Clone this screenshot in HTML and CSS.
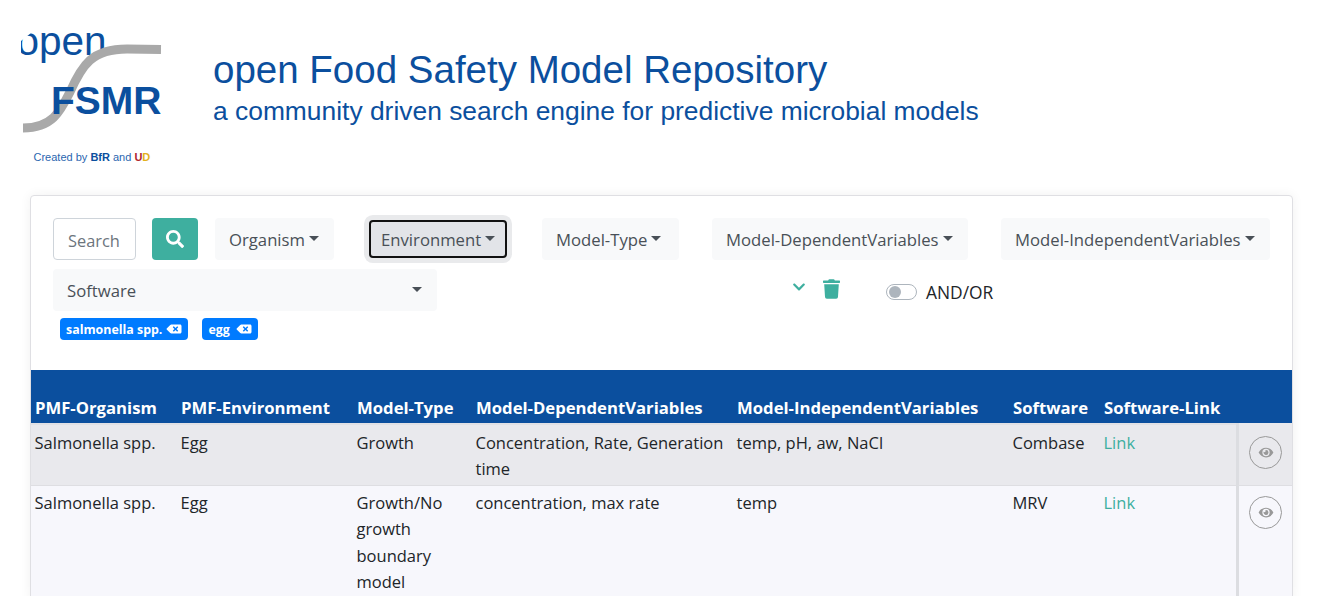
FILE: index.html
```html
<!DOCTYPE html>
<html lang="en">
<head>
    <meta charset="UTF-8">
    <meta name="viewport" content="width=device-width, initial-scale=1.0">
    <title>open Food Safety Model Repository</title>
    <link rel="stylesheet" href="styles.css">
</head>
<body>
    <header class="banner">
        <svg class="logo" width="190" height="150" viewBox="0 0 190 150">
            <clipPath id="open-clip"><polygon points="21,21 31,13 121,13 121,60 21,60"/></clipPath>
            <text class="logo-open" x="16.500" y="35" clip-path="url(#open-clip)">open</text>
            <path class="logo-curve" d="M23 108 C 52 108, 60 92, 70 72 C 82 45, 92 29, 127 29 L 161 29.500" />
            <text class="logo-fsmr" x="51" y="94">FSMR</text>
            <text class="logo-small" x="33.500" y="141">Created by <tspan class="logo-bold">BfR</tspan> and <tspan class="logo-u">U</tspan><tspan class="logo-d">D</tspan></text>
        </svg>
        <div class="banner-text">
            <h1>open Food Safety Model Repository</h1>
            <p>a community driven search engine for predictive microbial models</p>
        </div>
    </header>

    <main class="card">
        <div class="filters">
            <div class="filter-row">
                <input class="search-input" type="text" placeholder="Search">
                <button class="search-btn" aria-label="Search">
                    <svg width="18" height="18" viewBox="0 0 512 512"><path fill="#fff" d="M505 442.700 405.300 343c-4.500-4.500-10.600-7-17-7H372c27.600-35.300 44-79.700 44-128C416 93.100 322.900 0 208 0S0 93.100 0 208s93.100 208 208 208c48.300 0 92.700-16.400 128-44v16.300c0 6.400 2.500 12.500 7 17l99.700 99.700c9.400 9.400 24.600 9.400 33.900 0l28.300-28.300c9.400-9.400 9.400-24.600.1-34zM208 336c-70.700 0-128-57.200-128-128 0-70.700 57.200-128 128-128 70.700 0 128 57.200 128 128 0 70.700-57.200 128-128 128z"/></svg>
                </button>
                <button class="dropdown organism">Organism<span class="caret"></span></button>
                <button class="dropdown environment">Environment<span class="caret"></span></button>
                <button class="dropdown model-type">Model-Type<span class="caret"></span></button>
                <button class="dropdown dependent">Model-DependentVariables<span class="caret"></span></button>
                <button class="dropdown independent">Model-IndependentVariables<span class="caret"></span></button>
            </div>
            <div class="filter-row second">
                <button class="dropdown software">Software<span class="caret"></span></button>
                <svg class="chevron" width="14" height="14" viewBox="0 0 448 512"><path fill="#3eaf9f" d="M207 381.500 12.700 187.100c-9.400-9.400-9.400-24.600 0-33.900l22.700-22.700c9.400-9.400 24.500-9.400 33.900 0L224 284.500l154.700-154c9.400-9.300 24.500-9.300 33.900 0l22.700 22.700c9.400 9.400 9.400 24.600 0 33.900L241 381.500c-9.400 9.400-24.600 9.400-34 0z"/></svg>
                <svg class="trash" width="17" height="20" viewBox="0 0 448 512"><path fill="#3eaf9f" d="M432 32H312l-9.400-18.700A24 24 0 0 0 281.100 0H166.800a23.700 23.700 0 0 0-21.400 13.300L136 32H16A16 16 0 0 0 0 48v32a16 16 0 0 0 16 16h416a16 16 0 0 0 16-16V48a16 16 0 0 0-16-16zM53.200 467a48 48 0 0 0 47.900 45h245.800a48 48 0 0 0 47.900-45L416 128H32z"/></svg>
                <label class="toggle"><span class="switch"><span class="knob"></span></span>AND/OR</label>
            </div>
            <div class="tags">
                <span class="tag">salmonella spp.
                    <svg width="16" height="12" viewBox="0 0 640 512"><path fill="#fff" d="M576 64H205.300A64 64 0 0 0 160 82.700L9.400 233.400c-12.500 12.500-12.500 32.800 0 45.300L160 429.300c12 12 28.300 18.700 45.300 18.700H576c35.300 0 64-28.700 64-64V128c0-35.300-28.700-64-64-64zm-84.700 254.100c6.200 6.200 6.200 16.400 0 22.600l-22.600 22.600c-6.200 6.200-16.400 6.200-22.600 0L384 300.800l-62.100 62.100c-6.200 6.200-16.400 6.200-22.600 0l-22.600-22.600c-6.200-6.200-6.200-16.400 0-22.600l62.100-62.100-62.100-62.100c-6.200-6.200-6.200-16.400 0-22.600l22.600-22.600c6.200-6.200 16.400-6.200 22.600 0l62.100 62.100 62.100-62.100c6.200-6.200 16.400-6.200 22.600 0l22.600 22.600c6.200 6.200 6.200 16.400 0 22.600L429.300 256z"/></svg>
                </span>
                <span class="tag">egg
                    <svg width="16" height="12" viewBox="0 0 640 512"><path fill="#fff" d="M576 64H205.300A64 64 0 0 0 160 82.700L9.400 233.400c-12.500 12.500-12.500 32.800 0 45.300L160 429.300c12 12 28.300 18.700 45.300 18.700H576c35.300 0 64-28.700 64-64V128c0-35.300-28.700-64-64-64zm-84.700 254.100c6.200 6.200 6.200 16.400 0 22.600l-22.600 22.600c-6.200 6.200-16.400 6.200-22.600 0L384 300.800l-62.100 62.100c-6.200 6.200-16.400 6.200-22.600 0l-22.600-22.600c-6.200-6.200-6.200-16.400 0-22.600l62.100-62.100-62.100-62.100c-6.200-6.200-6.200-16.400 0-22.600l22.600-22.600c6.200-6.200 16.400-6.200 22.600 0l62.100 62.100 62.100-62.100c6.200-6.200 16.400-6.200 22.600 0l22.600 22.600c6.200 6.200 6.200 16.400 0 22.600L429.300 256z"/></svg>
                </span>
            </div>
        </div>

        <table class="results">
            <colgroup>
                <col class="c-org"><col class="c-env"><col class="c-type"><col class="c-dep"><col class="c-ind"><col class="c-soft"><col class="c-link"><col class="c-view">
            </colgroup>
            <thead>
                <tr>
                    <th>PMF-Organism</th>
                    <th>PMF-Environment</th>
                    <th>Model-Type</th>
                    <th>Model-DependentVariables</th>
                    <th>Model-IndependentVariables</th>
                    <th>Software</th>
                    <th>Software-Link</th>
                    <th></th>
                </tr>
            </thead>
            <tbody>
                <tr class="odd">
                    <td>Salmonella spp.</td>
                    <td>Egg</td>
                    <td>Growth</td>
                    <td>Concentration, Rate, Generation time</td>
                    <td>temp, pH, aw, NaCl</td>
                    <td>Combase</td>
                    <td><a href="#">Link</a></td>
                    <td class="view-cell"><button class="view-btn" aria-label="View"><svg width="16" height="13" viewBox="0 0 576 512"><path fill="#999" d="M572.500 241.400C518.300 135.600 410.900 64 288 64S57.700 135.600 3.500 241.400a32.400 32.400 0 0 0 0 29.200C57.700 376.400 165.100 448 288 448s230.300-71.600 284.500-177.400a32.400 32.400 0 0 0 0-29.200zM288 400a144 144 0 1 1 144-144 143.900 143.900 0 0 1-144 144zm0-240a95.300 95.300 0 0 0-25.300 3.800 47.900 47.900 0 0 1-66.900 66.900A95.800 95.800 0 1 0 288 160z"/></svg></button></td>
                </tr>
                <tr class="even">
                    <td>Salmonella spp.</td>
                    <td>Egg</td>
                    <td>Growth/No growth boundary model</td>
                    <td>concentration, max rate</td>
                    <td>temp</td>
                    <td>MRV</td>
                    <td><a href="#">Link</a></td>
                    <td class="view-cell"><button class="view-btn" aria-label="View"><svg width="16" height="13" viewBox="0 0 576 512"><path fill="#999" d="M572.500 241.400C518.300 135.600 410.900 64 288 64S57.700 135.600 3.500 241.400a32.400 32.400 0 0 0 0 29.200C57.700 376.400 165.100 448 288 448s230.300-71.600 284.500-177.400a32.400 32.400 0 0 0 0-29.200zM288 400a144 144 0 1 1 144-144 143.900 143.900 0 0 1-144 144zm0-240a95.300 95.300 0 0 0-25.300 3.800 47.900 47.900 0 0 1-66.900 66.900A95.800 95.800 0 1 0 288 160z"/></svg></button></td>
                </tr>
            </tbody>
        </table>
    </main>
</body>
</html>
```

FILE: styles.css
```css
html, body {
    height: 100%;
    overflow: hidden;
}
body {
    margin: 0;
    background: #fff;
    font-family: "Open Sans", "Noto Sans", sans-serif;
    font-size: 16px;
    color: #212529;
}

/* banner */
.banner {
    display: flex;
    height: 195px;
    padding-top: 20px;
    box-sizing: border-box;
}
.logo {
    flex: none;
    display: block;
}
.logo-open {
    font-family: "Liberation Sans", sans-serif;
    font-size: 40.500px;
    fill: #0b4f9e;
}
.logo-curve {
    fill: none;
    stroke: #a9a9a9;
    stroke-width: 9;
}
.logo-fsmr {
    font-family: "Liberation Sans", sans-serif;
    font-size: 39px;
    font-weight: 700;
    fill: #0b4f9e;
}
.logo-small {
    font-family: "Liberation Sans", sans-serif;
    font-size: 11px;
    fill: #2a66b0;
}
.logo-bold {
    font-weight: 700;
    fill: #0b4f9e;
}
.logo-u {
    font-weight: 700;
    fill: #b0242c;
}
.logo-d {
    font-weight: 700;
    fill: #e3b21c;
}
.banner-text {
    margin: 28px 0 0 23px;
    font-family: "Liberation Sans", sans-serif;
    color: #0b4f9e;
}
.banner-text h1 {
    margin: 0;
    font-size: 38.500px;
    font-weight: 400;
    line-height: 44px;
}
.banner-text p {
    margin: 2px 0 0;
    font-size: 26.400px;
    line-height: 34px;
}

/* card */
.card {
    margin: 0 25px 0 30px;
    border: 1px solid #dfdfe3;
    border-radius: 4px;
    box-shadow: 0 0 12px rgba(0, 0, 0, 0.06);
    background: #fff;
}
.filters {
    height: 174px;
    padding: 22px 22px 0;
    box-sizing: border-box;
}
.filter-row {
    display: flex;
    align-items: center;
}
.filter-row.second {
    margin-top: 9px;
}
.search-input {
    width: 83px;
    height: 42px;
    box-sizing: border-box;
    padding: 2px 14px 0;
    border: 1px solid #ced4da;
    border-radius: 4px;
    font: inherit;
    font-size: 16.400px;
}
.search-input::placeholder {
    color: #6c757d;
}
.search-btn {
    display: flex;
    align-items: center;
    justify-content: center;
    width: 46px;
    height: 42px;
    margin-left: 16px;
    border: none;
    border-radius: 4px;
    background: #3eaf9f;
}
.dropdown {
    display: flex;
    align-items: center;
    height: 42px;
    padding: 0 14px;
    border: none;
    border-radius: 4px;
    background: #f8f9fa;
    color: #495057;
    font: inherit;
    font-size: 16.700px;
    white-space: nowrap;
}
.caret {
    width: 0;
    height: 0;
    margin-left: 4px;
    margin-top: -2px;
    border-top: 5px solid #495057;
    border-left: 5px solid transparent;
    border-right: 5px solid transparent;
}
.organism {
    width: 119px;
    margin-left: 17px;
}
.environment {
    width: 138px;
    height: 38px;
    margin: 0 2px 0 35px;
    padding: 0 10px;
    background: #e2e4e8;
    border: 2px solid #111;
    box-shadow: 0 0 0 5px #e9eaec;
}
.model-type {
    width: 137px;
    margin-left: 33px;
}
.dependent {
    width: 256px;
    margin-left: 33px;
}
.independent {
    width: 269px;
    margin-left: 33px;
}
.software {
    justify-content: space-between;
    width: 384px;
    padding-right: 15px;
}
.chevron {
    margin: -7px 0 0 355px;
}
.trash {
    margin: -3px 0 0 17px;
}
.toggle {
    display: flex;
    align-items: center;
    margin: 3px 0 0 46px;
    font-size: 17.400px;
}
.switch {
    display: block;
    width: 31px;
    height: 16px;
    box-sizing: border-box;
    margin-right: 9px;
    padding: 1px 2px;
    border: 1px solid #adb5bd;
    border-radius: 8px;
}
.knob {
    display: block;
    width: 12px;
    height: 12px;
    border-radius: 50%;
    background: #adb5bd;
}
.tags {
    display: flex;
    gap: 14px;
    margin: 7px 0 0 7px;
}
.tag {
    display: flex;
    align-items: center;
    justify-content: space-between;
    gap: 4px;
    box-sizing: border-box;
    min-width: 56px;
    height: 22px;
    padding: 0 6px;
    border-radius: 4px;
    background: #007bff;
    color: #fff;
    font-size: 12.400px;
    font-weight: 700;
}

/* table */
.results {
    width: 100%;
    table-layout: fixed;
    border-collapse: separate;
    border-spacing: 0;
}
.c-org { width: 146px; }
.c-env { width: 176px; }
.c-type { width: 119px; }
.c-dep { width: 261px; }
.c-ind { width: 276px; }
.c-soft { width: 91px; }
.c-link { width: 136px; }
.results th {
    height: 53px;
    box-sizing: border-box;
    padding: 0 4px 4px;
    vertical-align: bottom;
    text-align: left;
    background: #0b4f9e;
    color: #fff;
    font-size: 16.700px;
    font-weight: 700;
    white-space: nowrap;
}
.results td {
    padding: 4px 4px 4px 3.500px;
    vertical-align: top;
    line-height: 26.400px;
    font-size: 16.500px;
    border-bottom: 1px solid #dedee2;
}
.odd td {
    padding-top: 5px;
    padding-bottom: 2px;
    border-top: 2px solid #e1e1e5;
    background: #e9e9ed;
}
.even td {
    background: #f7f7fc;
}
.results a {
    color: #3eaf9f;
    text-decoration: none;
}
.results .view-cell {
    padding: 10px 0 0 10px;
    border-left: 3px solid #dcdde1;
}
.odd .view-cell {
    border-top: none;
}
.results .odd .view-cell {
    padding-top: 13px;
}
.view-btn {
    display: flex;
    align-items: center;
    justify-content: center;
    width: 33px;
    height: 33px;
    padding: 0;
    border: 1px solid #999;
    border-radius: 50%;
    background: transparent;
}
```
